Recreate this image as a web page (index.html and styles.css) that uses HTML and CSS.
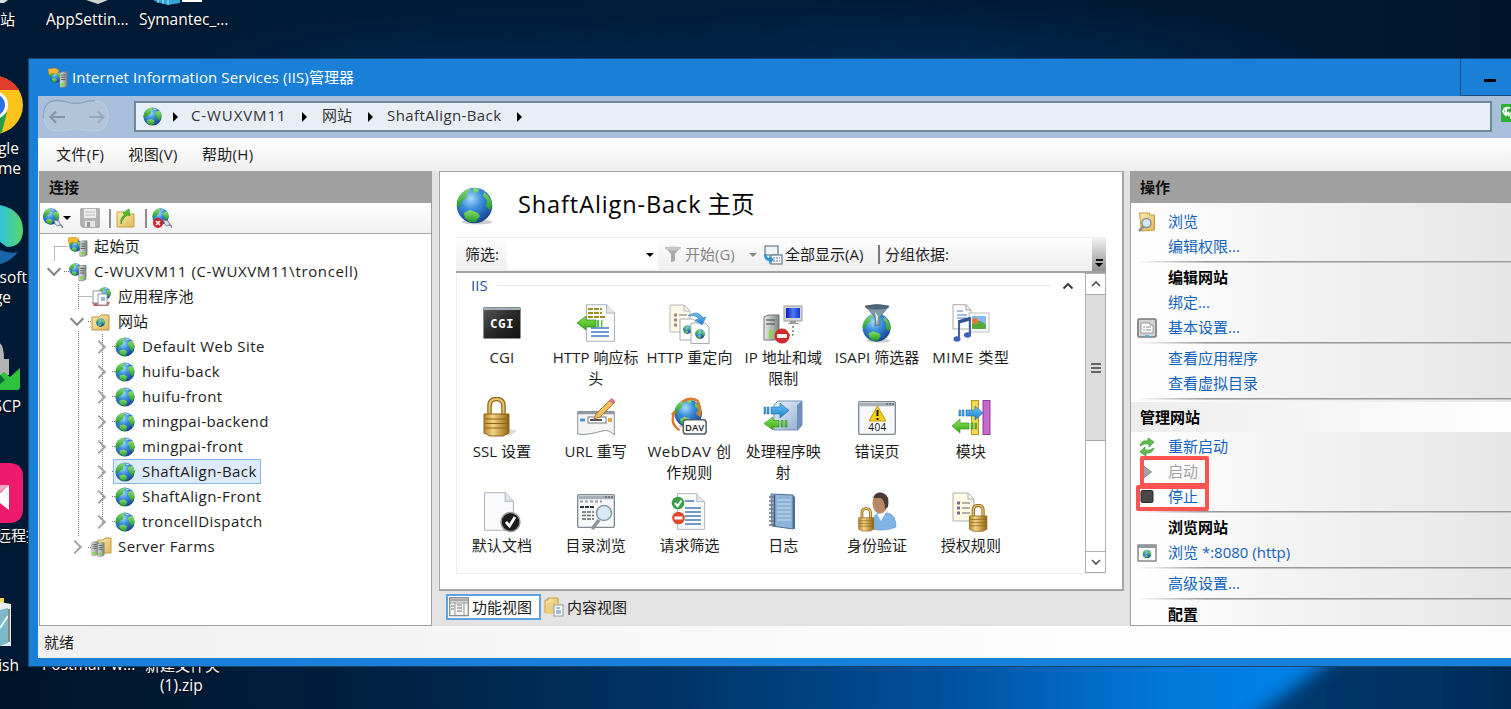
FILE: index.html
```html
<!DOCTYPE html>
<html lang="zh-CN">
<head>
<meta charset="utf-8">
<title>Internet Information Services (IIS)管理器</title>
<link rel="stylesheet" href="styles.css">
</head>
<body>
<svg class="defs" aria-hidden="true">
  <defs>
    <radialGradient id="sea" cx=".4" cy=".3" r=".75"><stop offset="0" stop-color="#a9dcfb"/><stop offset=".4" stop-color="#3c8fdd"/><stop offset="1" stop-color="#143a8c"/></radialGradient>
    <linearGradient id="land" x1="0" y1="0" x2="0" y2="1"><stop offset="0" stop-color="#8ede6a"/><stop offset="1" stop-color="#1f9a26"/></linearGradient>
    <linearGradient id="gold" x1="0" y1="0" x2="1" y2="0"><stop offset="0" stop-color="#b8862c"/><stop offset=".35" stop-color="#f3d585"/><stop offset="1" stop-color="#94640f"/></linearGradient>
    <linearGradient id="fold" x1="0" y1="0" x2="1" y2="1"><stop offset="0" stop-color="#fbeab0"/><stop offset="1" stop-color="#dfb955"/></linearGradient>
    <linearGradient id="grn" x1="0" y1="0" x2="0" y2="1"><stop offset="0" stop-color="#8be650"/><stop offset="1" stop-color="#35a91c"/></linearGradient>
    <linearGradient id="blu" x1="0" y1="0" x2="0" y2="1"><stop offset="0" stop-color="#6cc5f5"/><stop offset="1" stop-color="#1d7fcc"/></linearGradient>
    <linearGradient id="box3" x1="0" y1="0" x2="1" y2="1"><stop offset="0" stop-color="#eef4fb"/><stop offset="1" stop-color="#8aa9cf"/></linearGradient>
    <linearGradient id="steel" x1="0" y1="0" x2="1" y2="0"><stop offset="0" stop-color="#e8eceb"/><stop offset="1" stop-color="#7d8582"/></linearGradient>
    <linearGradient id="scr" x1="0" y1="0" x2="1" y2="0"><stop offset="0" stop-color="#0b18c0"/><stop offset=".5" stop-color="#4e7cf0"/><stop offset="1" stop-color="#1a35cf"/></linearGradient>
    <linearGradient id="cgi" x1="0" y1="0" x2="1" y2="1"><stop offset="0" stop-color="#5a5a5a"/><stop offset=".5" stop-color="#2a2a2a"/><stop offset="1" stop-color="#111"/></linearGradient>
    <symbol id="globe" viewBox="0 0 20 20">
      <circle cx="10" cy="10" r="9.600" fill="url(#sea)"/>
      <path d="M2 5Q5 1 9 .7L10 3 8 4 8.300 7 5 8.500 3.500 11 .8 10.500Q.6 7.500 2 5Z" fill="url(#land)"/>
      <path d="M14 4.500L17.500 4Q19.700 7 19.500 10L17.500 14.500 15.500 12.500 14 9 12.500 7Z" fill="url(#land)"/>
      <path d="M4.500 13.500L9 12.500 12 14.500 11 18.500 8 19.200Q5.500 18 4.500 16Z" fill="url(#land)"/>
      <path d="M10 1.500L15 2.300 12 3.300Z" fill="#c9edff"/>
    </symbol>
    <symbol id="bigglobe" viewBox="0 0 38 38">
      <ellipse cx="21" cy="35" rx="15" ry="2.500" fill="#aaa" opacity=".6"/>
      <circle cx="18.500" cy="18.500" r="17.800" fill="url(#sea)"/>
      <path d="M2 12Q7 3 15 1.500L13 5 10 7 11 10 6 14 4 20 1 19Q1 15 2 12Z" fill="url(#land)"/>
      <path d="M17 1L23 1.500 22 5 18 6ZM28 5Q36 11 36 18L34 24 30 19 31 13 27 9Z" fill="url(#land)"/>
      <path d="M8 26L14 23 22 26 24 29 20 35 14 35 9 31Z" fill="url(#land)"/>
    </symbol>
    <symbol id="server" viewBox="0 0 10 18"><path d="M1 2L4 .5H9V16L6 17.500H1Z" fill="url(#steel)" stroke="#777" stroke-width=".7"/><path d="M2 4h5M2 6.500h5M2 9h5" stroke="#555"/><rect x="2" y="13" width="4" height="3" fill="#7ddc3a"/></symbol>
    <symbol id="start" viewBox="0 0 20 20"><svg x="1" y="2" width="13" height="13"><use href="#globe"/></svg><path d="M0 1L7 0 11 2 9 6 4 5 1 7Z" fill="#f5b934" stroke="#bb7b10" stroke-width=".5"/><svg x="11" y="3" width="9" height="17"><use href="#server"/></svg></symbol>
    <symbol id="host" viewBox="0 0 20 20"><svg x="1" y="1" width="13" height="13"><use href="#globe"/></svg><svg x="10" y="2" width="9" height="18"><use href="#server"/></svg></symbol>
    <symbol id="doc" viewBox="0 0 30 38"><path d="M1 .7H21L29 9V37.300H1Z" fill="#fbfbfd" stroke="#aab4bf"/><path d="M21 .7V9H29" fill="#e3e7ec" stroke="#aab4bf"/></symbol>
    <symbol id="lock" viewBox="0 0 28 40"><path d="M6.500 19V9Q6.500 2 13.500 2T20.500 9V19" fill="none" stroke="#8e6215" stroke-width="4.500"/><path d="M6.500 19V9Q6.500 2 13.500 2T20.500 9V19" fill="none" stroke="#e8c76c" stroke-width="2"/><path d="M1 17H26V36L20 39H7L1 36Z" fill="url(#gold)" stroke="#8d6217"/><path d="M2 22H25M2 26.500H25M2 31H25" stroke="#8d6217" stroke-width="1"/></symbol>
    <symbol id="win" viewBox="0 0 38 34"><rect x=".7" y=".7" width="36.600" height="32.600" rx="1" fill="#f7f8f9" stroke="#7d8791" stroke-width="1.300"/><path d="M1.500 3.500H36.500" stroke="#a6afb9" stroke-width="3.500"/><path d="M28 3h2M31 3h2M34 3h2" stroke="#444"/></symbol>
    <symbol id="plug" viewBox="0 0 20 20"><svg width="17" height="17"><use href="#globe"/></svg><path d="M11.500 12L16 13 18 16.500 15 18 12.500 16Z" fill="#dfe4e8" stroke="#79848d"/><path d="M17 17Q20 17 20 20" fill="none" stroke="#79848d" stroke-width="1.500"/></symbol>
  </defs>
</svg>

<div class="desktop">
  <svg class="beam" viewBox="0 0 1511 43" preserveAspectRatio="none">
    <defs>
      <linearGradient id="bm"><stop offset="0" stop-color="#00142a"/><stop offset=".22" stop-color="#001e3c"/><stop offset=".45" stop-color="#003467"/><stop offset=".62" stop-color="#004f9b"/><stop offset=".7" stop-color="#0064be"/><stop offset=".77" stop-color="#0078da"/><stop offset=".87" stop-color="#0084ea"/><stop offset=".9" stop-color="#005cae"/></linearGradient>
      <linearGradient id="dk"><stop offset="0" stop-color="#003c74"/><stop offset="1" stop-color="#00264d"/></linearGradient>
      <filter id="soft"><feGaussianBlur stdDeviation="14 3"/></filter>
    </defs>
    <rect width="1511" height="43" fill="url(#bm)"/>
    <path d="M1350 -20L1235 65H1600V-20Z" fill="url(#dk)" filter="url(#soft)"/>
  </svg>

  <svg class="d-top" width="240" height="10"><path d="M0 0H8L4 3H0Z" fill="#d9d9d9"/><path d="M86 0H108L98 4Z" fill="#cfd6d2"/><path d="M153 0H180V3L168 5 157 2Z" fill="#35a5d8"/><path d="M158 0v3M163 0v4M168 0v5" stroke="#bde8fa"/><rect x="182" y="0" width="20" height="2" fill="#fff"/></svg>
  <span class="d-text t-zhan">站</span>
  <span class="d-text t-app">AppSettin...</span>
  <span class="d-text t-sym">Symantec_...</span>
  <svg class="d-ico chrome" width="23" height="60" viewBox="0 0 23 60"><circle cx="-6" cy="30" r="29" fill="#fbc31c"/><path d="M-6 1A29 29 0 0 1 19 15H-6Z" fill="#e23c2e"/><path d="M-6 59A29 29 0 0 0 2 57L7 37-6 44Z" fill="#24a148"/><circle cx="-6" cy="30" r="14" fill="#fff"/><circle cx="-6" cy="30" r="11" fill="#2f6fe4"/></svg>
  <span class="d-text t-gle">gle</span>
  <span class="d-text t-me">me</span>
  <svg class="d-ico edge" width="23" height="62" viewBox="0 0 23 62"><defs><linearGradient id="eg"><stop offset="0" stop-color="#2fc2d8"/><stop offset="1" stop-color="#5ad765"/></linearGradient></defs><path d="M0 1Q23 6 23 27Q22 43 7 43L0 38Z" fill="url(#eg)"/><path d="M0 46Q10 50 18 48Q10 58 0 60Z" fill="#1b63a8"/></svg>
  <span class="d-text t-soft">soft</span>
  <span class="d-text t-ge">ge</span>
  <svg class="d-ico scp" width="23" height="54" viewBox="0 0 23 54"><path d="M0 2Q4 6 4 18H9V34H0Z" fill="#b3b3b3"/><path d="M0 34L4 31 10 36 20 27V46Q20 49 17 49H0V42L4 39Z" fill="#2fc23c"/><path d="M0 34L5 39 0 43Z" fill="#063"/></svg>
  <span class="d-text t-scp">SCP</span>
  <svg class="d-ico pink" width="23" height="60" viewBox="0 0 23 60"><path d="M0 0H10Q23 1 23 13V46Q23 59 10 60H0Z" fill="#ee1b6c"/><path d="M0 30L9 22V47L0 40Z" fill="#fff"/><path d="M0 22H9L0 29Z" fill="#f9a9c6"/></svg>
  <span class="d-text t-yuan">远程控</span>
  <svg class="d-ico pub" width="14" height="54" viewBox="0 0 14 54"><path d="M0 0H4V8H0Z" fill="#f1d458"/><path d="M0 4L11 6V48H0Z" fill="#e9edf0"/><path d="M0 12L8 10V45L0 48Z" fill="#7cb8c9"/><path d="M0 30L8 18" stroke="#e5f6fa" stroke-width="2"/><path d="M9 11V44" stroke="#8c8877" stroke-width="2"/></svg>
  <span class="d-text t-ish">ish</span>
  <span class="d-text t-post">Postman-w...</span>
  <span class="d-text t-new">新建文件夹</span>
  <span class="d-text t-zip">(1).zip</span>

  <main class="window">
    <header class="title">
      <svg width="20" height="20"><use href="#start"/></svg>
      <h1>Internet Information Services (IIS)管理器</h1>
      <div class="min"><i></i></div>
    </header>

    <div class="inner">
      <nav class="address">
        <svg class="nav" width="70" height="36" viewBox="0 0 70 36"><path d="M3 18Q3 3 16 3C25 3 27 6 35 6S45 3 54 3Q67 3 67 18T54 33C45 33 43 31 35 31S25 33 16 33Q3 33 3 18Z" fill="#b2c4da" stroke="#c0cfe1"/><path d="M2.500 20Q2 2.500 16 2.500C25 2.500 27 5.500 35 5.500S45 2.500 54 2.500" fill="none" stroke="#8fa1b8" stroke-width="1.300"/><path d="M24 19H10M15 13.500L9.500 19 15 24.500" fill="none" stroke="#8494a6" stroke-width="2.200"/><path d="M48 19H62M57 13.500L62.500 19 57 24.500" fill="none" stroke="#98a8bb" stroke-width="2"/></svg>
        <div class="crumbs">
          <svg class="cg" width="19" height="19"><use href="#globe"/></svg>
          <i class="tri"></i><span class="c1">C-WUXVM11</span><i class="tri"></i><span class="c2">网站</span><i class="tri"></i><span class="c3">ShaftAlign-Back</span><i class="tri"></i>
        </div>
        <svg class="refresh" width="20" height="18" viewBox="0 0 20 18"><rect width="20" height="18" rx="1" fill="#2fae35"/><path d="M2 8Q3 3 9 4M5 4V11M2 8L5 11 8 8" stroke="#fff" stroke-width="2" fill="none"/><path d="M10 15V9M7 12L10 9" stroke="#dfffd9" stroke-width="2"/></svg>
      </nav>
      <div class="menu"><span>文件(F)</span><span>视图(V)</span><span>帮助(H)</span></div>

      <div class="body">
        <section class="left">
          <h2>连接</h2>
          <div class="tools">
            <svg width="21" height="20"><use href="#plug"/></svg>
            <i class="down"></i>
            <svg class="save" width="20" height="20" viewBox="0 0 20 20"><path d="M.8.8H19.200V19.200H2.500L.8 17.500Z" fill="#b4b4b4" stroke="#999"/><rect x="4" y="1" width="12" height="9" fill="#ececec"/><path d="M5 4h10M5 7h10" stroke="#bbb"/><rect x="5" y="13" width="10" height="6" fill="#e4e4e4"/><rect x="7" y="14" width="3" height="5" fill="#999"/></svg>
            <i class="bar"></i>
            <svg class="up" width="19" height="20" viewBox="0 0 19 20"><path d="M1 4H8L10 6H18V19H1Z" fill="url(#fold)" stroke="#c9a13c"/><path d="M5 16Q4 9 9 7L7 5 13 1 14 8 12 7Q7 9 5 16Z" fill="#4fc02c" stroke="#2d8a18" stroke-width=".6"/></svg>
            <i class="bar"></i>
            <svg class="del" width="21" height="21" viewBox="0 0 21 21"><use href="#plug" width="20" height="20"/><circle cx="6" cy="15" r="5" fill="#d3202b"/><path d="M4 13l4 4M8 13l-4 4" stroke="#fff" stroke-width="1.500"/></svg>
          </div>
          <div class="tree">
            <svg class="lines" width="120" height="340" viewBox="0 0 120 340"><path d="M14.500 12.500H28M14.500 12.500V27M24 37.500H31M38.500 50V75M38.500 62.500H52M48 87.500H52M38.500 97V302M48 313.500H54M62.500 100V292M72 112.500H78M72 137.500H78M72 162.500H78M72 187.500H78M72 212.500H78M72 237.500H78M72 262.500H78M72 287.500H78" fill="none" stroke="#777" stroke-dasharray="1 1"/></svg>
            <div class="row l0"><i class="tw"></i><svg width="20" height="20"><use href="#start"/></svg><span>起始页</span></div>
            <div class="row l0"><i class="tw open"></i><svg width="20" height="20"><use href="#host"/></svg><span class="host">C-WUXVM11 (C-WUXVM11\troncell)</span></div>
            <div class="row l1"><i class="tw"></i><svg width="20" height="20" viewBox="0 0 20 20"><svg x="7" y="0" width="13" height="13"><use href="#globe"/></svg><path d="M1 15H19L17 19H3Z" fill="#c95858"/><rect x="2" y="4" width="9" height="12" fill="#fff" stroke="#8e9aa6"/><rect x="7" y="7" width="9" height="11" fill="#fff" stroke="#8e9aa6"/><rect x="10" y="10" width="4" height="4" fill="#9bb6dc"/></svg><span class="cjk">应用程序池</span></div>
            <div class="row l1"><i class="tw open"></i><svg width="20" height="20" viewBox="0 0 20 20"><path d="M1 5H8L10 3H18V18H1Z" fill="url(#fold)" stroke="#b9913f"/><svg x="5" y="6" width="9" height="9"><use href="#globe"/></svg></svg><span class="cjk">网站</span></div>
            <div class="row l2"><i class="tw shut"></i><svg width="20" height="20"><use href="#globe"/></svg><span>Default Web Site</span></div>
            <div class="row l2"><i class="tw shut"></i><svg width="20" height="20"><use href="#globe"/></svg><span>huifu-back</span></div>
            <div class="row l2"><i class="tw shut"></i><svg width="20" height="20"><use href="#globe"/></svg><span>huifu-front</span></div>
            <div class="row l2"><i class="tw shut"></i><svg width="20" height="20"><use href="#globe"/></svg><span>mingpai-backend</span></div>
            <div class="row l2"><i class="tw shut"></i><svg width="20" height="20"><use href="#globe"/></svg><span>mingpai-front</span></div>
            <div class="row l2 sel"><i class="tw shut"></i><div class="hl"><svg width="20" height="20"><use href="#globe"/></svg><span>ShaftAlign-Back</span></div></div>
            <div class="row l2"><i class="tw shut"></i><svg width="20" height="20"><use href="#globe"/></svg><span>ShaftAlign-Front</span></div>
            <div class="row l2"><i class="tw shut"></i><svg width="20" height="20"><use href="#globe"/></svg><span>troncellDispatch</span></div>
            <div class="row l1"><i class="tw shut"></i><svg width="20" height="20" viewBox="0 0 20 20"><path d="M7 3H12L14 1H20V16H7Z" fill="url(#fold)" stroke="#c49c42"/><svg x="0" y="4" width="8" height="15"><use href="#server"/></svg><svg x="6" y="5" width="8" height="15"><use href="#server"/></svg></svg><span>Server Farms</span></div>
          </div>
        </section>

        <section class="centre">
          <div class="home">
            <div class="head"><svg width="38" height="38"><use href="#bigglobe"/></svg><h3><span>ShaftAlign-Back</span> 主页</h3></div>
            <div class="filter">
              <span class="fl">筛选:</span>
              <div class="combo"><i class="down"></i></div>
              <svg class="funnel" width="18" height="17" viewBox="0 0 18 17"><path d="M1 1H17L11 8V15L7 16V8Z" fill="#a9a9a9"/><ellipse cx="9" cy="2.500" rx="8" ry="2" fill="#c6c6c6"/></svg>
              <span class="go">开始(G)</span><i class="down grey"></i>
              <svg class="all" width="20" height="20" viewBox="0 0 20 20"><rect x="2" y="1" width="13" height="9" fill="#eef3f8" stroke="#76838f" stroke-width="1.300"/><rect x="8" y="10" width="11" height="9" fill="#f3f5f8" stroke="#76838f" stroke-width="1.300"/><path d="M10 13h7M10 16h7" stroke="#6d7fa0" stroke-dasharray="2 1"/><path d="M1 9Q1 16 6 16V19L11 14.500 6 11V13Q4 13 3 9Z" fill="#2e93d8"/></svg>
              <span class="sa">全部显示(A)</span><i class="bar"></i><span class="gb">分组依据:</span>
              <div class="more"><i></i><i class="down"></i></div>
            </div>
            <div class="list">
              <div class="items">
                <div class="group"><span>IIS</span><i></i><svg width="12" height="8" viewBox="0 0 12 8"><path d="M1.500 6.500L6 2 10.500 6.500" fill="none" stroke="#333" stroke-width="1.800"/></svg></div>
                <div class="grid">
                  <div class="item"><svg viewBox="0 0 38 38"><rect x=".5" y="3.500" width="37" height="31" rx="1" fill="url(#cgi)" stroke="#8c8c8c"/><path d="M1 5H37" stroke="#9fb0b8" stroke-width="2"/><text x="19" y="23.500" text-anchor="middle" class="cgi">CGI</text></svg><p>CGI</p></div>
                  <div class="item"><svg viewBox="0 0 38 38"><svg x="8" y="0" width="31" height="38"><use href="#doc"/></svg><path d="M11 5h14M11 9h14M11 13h18" stroke="#9c9022" stroke-width="2.200" stroke-dasharray="5 1"/><path d="M14 24h18M14 28h18M14 32h18" stroke="#3b7ac4" stroke-width="1.600"/><path d="M0 19L9 12V16H19V23H9V26Z" fill="url(#grn)" stroke="#2d8a18" stroke-width=".7"/><path d="M20 16h2v7h-2zM24 16h1.500v7H24z" fill="#5cc43c"/></svg><p>HTTP 响应标头</p></div>
                  <div class="item"><svg viewBox="0 0 40 40" class="i40"><path d="M1 1H15L21 7V28H1Z" fill="#fdf9e9" stroke="#b6b6b6"/><path d="M15 1V7H21" fill="none" stroke="#b6b6b6"/><path d="M5 11h3M5 16h3M5 21h3" stroke="#a88a72" stroke-width="3"/><path d="M10 11h8" stroke="#777"/><path d="M11 15H24L28 19V36H11Z" fill="#fff" stroke="#aaa"/><svg x="14" y="21" width="9" height="9"><use href="#globe"/></svg><path d="M22 19H36L40 23V39.500H22Z" fill="#fff" stroke="#aaa"/><svg x="26" y="25" width="10" height="10"><use href="#globe"/></svg><path d="M19 12Q29 5 34 14L37 13 33 21 26 16 30 15Q26 10 19 12Z" fill="url(#blu)" stroke="#1f6cab" stroke-width=".5"/></svg><p>HTTP 重定向</p></div>
                  <div class="item"><svg viewBox="0 0 40 40" class="i40"><path d="M1 13L5 11H16V34L12 36H1Z" fill="url(#steel)" stroke="#6d7371"/><path d="M3 16h9M3 20h9" stroke="#444"/><rect x="6" y="26" width="4" height="8" fill="#8ad54a"/><rect x="21" y="2" width="18" height="15" fill="#d7d7d7" stroke="#9b9b9b"/><rect x="23" y="4" width="14" height="10" fill="url(#scr)"/><path d="M27 17h6v2h3v1H25v-1h2z" fill="#999"/><path d="M30 22V31H25" fill="none" stroke="#333" stroke-dasharray="2 2"/><circle cx="19" cy="32" r="7.500" fill="#cf2a28"/><rect x="14" y="30" width="10" height="4" rx="1" fill="#fff"/></svg><p>IP 地址和域限制</p></div>
                  <div class="item"><svg viewBox="0 0 38 38"><svg x="4" y="9" width="30" height="30"><use href="#bigglobe"/></svg><path d="M7 2Q19-1 31 2L22 13V21L17 22V13Z" fill="#7d98a8" stroke="#53687a" stroke-width=".7"/><ellipse cx="19" cy="3" rx="12" ry="2.500" fill="#4e6678"/><path d="M17 8L19 21 20 12Z" fill="#e8f2f6"/></svg><p>ISAPI 筛选器</p></div>
                  <div class="item"><svg viewBox="0 0 38 38"><path d="M1 .7H14L19 6V25H1Z" fill="#fff" stroke="#aaa"/><path d="M14 .7V6H19" fill="none" stroke="#999"/><path d="M5 7h6M5 11h10M5 14h10" stroke="#4c7ab4"/><rect x="17" y="9" width="20" height="19" fill="#fff" stroke="#bbb"/><rect x="20" y="12" width="14" height="13" fill="#86b7ef"/><path d="M20 20Q26 13 34 21V25H20Z" fill="#58a838"/><circle cx="23" cy="17" r="3" fill="#ea7a2a"/><path d="M7 34V17L18 14V30" fill="none" stroke="#34518f" stroke-width="1.800"/><path d="M7 18L18 15" stroke="#34518f" stroke-width="3"/><ellipse cx="5" cy="35" rx="3.500" ry="2.700" fill="#3d62b4"/><ellipse cx="15.500" cy="31" rx="3.500" ry="2.700" fill="#3d62b4"/></svg><p class="wide">MIME 类型</p></div>

                  <div class="item"><svg viewBox="0 0 38 38"><path d="M24 30L34 33 28 37H10Z" fill="#ccc" opacity=".7"/><svg x="0" y="-1" width="28" height="40"><use href="#lock"/></svg></svg><p>SSL 设置</p></div>
                  <div class="item"><svg viewBox="0 0 38 38"><path d="M.7 13.500H37.300V37Q32 31 25 33T12 36 .7 36Z" fill="#f4f4f4" stroke="#8b949c"/><path d="M1 15H37" stroke="#8e99a4" stroke-width="2.500"/><path d="M3 22h5" stroke="#4f94d0" stroke-width="3"/><rect x="11" y="19" width="18" height="6" fill="#fff" stroke="#777"/><path d="M13 22h12" stroke="#555" stroke-width="2"/><rect x="31" y="20" width="4" height="4" fill="#e0a848"/><path d="M17 21L19 16 34 1 38 4 23 19Z" fill="#f0c064" stroke="#a8702a"/><path d="M32 3L35 0 38 3 36 6Z" fill="#d4788a"/></svg><p>URL 重写</p></div>
                  <div class="item"><svg viewBox="0 0 38 40"><svg x="3" y="1" width="31" height="31"><use href="#bigglobe"/></svg><path d="M9 34Q-2 27 4 14M12 4Q20-2 28 3Q32 9 30 18L27 15M4 14L1 18" fill="none" stroke="#e0762c" stroke-width="2.500"/><rect x="13" y="23" width="24" height="15" rx="3" fill="#fff" stroke="#4d5f6b" stroke-width="1.600"/><text x="25" y="34.500" text-anchor="middle" class="dav">DAV</text></svg><p class="wide">WebDAV 创作规则</p></div>
                  <div class="item"><svg viewBox="0 0 38 38"><path d="M10 7L14 3H38V27L34 32H10Z" fill="url(#box3)" stroke="#7893b5"/><path d="M33 7L38 3V27L33 32Z" fill="#6f8fb8"/><path d="M0 9h1.500v7H0zM3 9h2v7H3zM7 9H16V5L25 12.500 16 20V16H7Z" fill="url(#blu)" stroke="#1b6fad" stroke-width=".6"/><path d="M0 25.500L9 19V22.500H15V29H9V32ZM17 22.500h2V29h-2zM21 22.500h2V29h-2z" fill="url(#grn)" stroke="#2d8a18" stroke-width=".6"/></svg><p>处理程序映射</p></div>
                  <div class="item"><svg viewBox="0 0 38 38"><svg y="3" width="38" height="32"><use href="#win" width="38" height="34"/></svg><path d="M19.500 8L28 23H11Z" fill="#f6cf1d" stroke="#c69a08" stroke-linejoin="round"/><path d="M19.500 12v6M19.500 20v2" stroke="#111" stroke-width="2"/><text x="19.500" y="32.500" text-anchor="middle" class="e404">404</text></svg><p>错误页</p></div>
                  <div class="item"><svg viewBox="0 0 38 38"><rect x="19.500" y="2.500" width="7" height="34" fill="#f2d84d" stroke="#b79a1d"/><rect x="31" y="2.500" width="7" height="34" fill="#c768cf" stroke="#8e3d98"/><path d="M7 12h1.500v6H7zM10 12h2v6h-2zM14 12H23V8L31 15 23 22V18H14Z" fill="url(#blu)" stroke="#1b6fad" stroke-width=".6"/><path d="M0 28L8 21V25H17V31H8V35ZM19 25h2v6h-2zM23 25h1.500v6H23z" fill="url(#grn)" stroke="#2d8a18" stroke-width=".6"/></svg><p>模块</p></div>

                  <div class="item"><svg viewBox="0 0 38 40" class="i40"><svg x="0" y="0" width="32" height="39"><use href="#doc"/></svg><circle cx="27.500" cy="30" r="9.500" fill="#1d1d1d" stroke="#999" stroke-width="1.500"/><path d="M23 30L26.500 34 32 25" fill="none" stroke="#fff" stroke-width="2.800"/></svg><p>默认文档</p></div>
                  <div class="item"><svg viewBox="0 0 38 38"><svg y="2" width="38" height="34"><use href="#win"/></svg><path d="M3 9.500h22" stroke="#999" stroke-width="2" stroke-dasharray="3 2"/><path d="M3 15h15" stroke="#333" stroke-width="2" stroke-dasharray="4 1"/><path d="M5 20h12M5 23.500h12M5 27h12" stroke="#666" stroke-width="1.500" stroke-dasharray="4 1"/><path d="M22 28L15 37" stroke="#909090" stroke-width="3.500"/><circle cx="27" cy="21" r="7.500" fill="#d6eafa" stroke="#8d9aa5" stroke-width="1.600"/></svg><p>目录浏览</p></div>
                  <div class="item"><svg viewBox="0 0 38 38"><svg x="6" y="1" width="30" height="37"><use href="#doc"/></svg><path d="M15 9h9M15 16h16M15 20h16M15 24h16M15 28h16M15 32h16" stroke="#477bb9" stroke-width="1.300"/><circle cx="8" cy="11" r="6.300" fill="#3c9d4b"/><path d="M5 11L7.500 14 11.500 8.500" fill="none" stroke="#fff" stroke-width="2"/><circle cx="8.500" cy="26" r="6.300" fill="#de4a2c"/><rect x="4.500" y="24.500" width="8" height="3" fill="#fff"/></svg><p>请求筛选</p></div>
                  <div class="item"><svg viewBox="0 0 38 38"><path d="M7 2L29 3V37L8 34Z" fill="#8eb3d8" stroke="#4d6f95"/><path d="M29 3L31 5V37L29 37Z" fill="#4d6f95"/><path d="M13 8H27M13 12H27M13 16H27M13 20H27M13 24H27M13 28H27" stroke="#c3dbee"/><path d="M10.500 3V34" stroke="#395a80" stroke-width="1.400"/><path d="M5 5h5M5 9h5M5 13h5M5 17h5M5 21h5M5 25h5M5 29h5M5 33h5" stroke="#777" stroke-width="1.500"/></svg><p>日志</p></div>
                  <div class="item"><svg viewBox="0 0 38 40" class="i40"><path d="M14 37Q14 22 21 21H30Q38 23 38 35Q27 40 14 37Z" fill="#80b4e4" stroke="#4c7fb3" stroke-width=".5"/><path d="M19 22L23 29 28 20Z" fill="#fff"/><ellipse cx="22" cy="11" rx="7.500" ry="10.500" fill="#b98863"/><path d="M15 6Q18-1 25 1Q32 3 30 15L27 17Q27 9 23 6Z" fill="#4a3d37"/><svg x="0" y="15" width="17" height="25"><use href="#lock"/></svg></svg><p>身份验证</p></div>
                  <div class="item"><svg viewBox="0 0 38 40" class="i40"><path d="M1 1H16L22 7V29H1Z" fill="#fdfbe6" stroke="#b0b0b0"/><path d="M16 1V7H22" fill="none" stroke="#aaa"/><path d="M5 11h3M5 16h3M5 21h3" stroke="#7d6a8e" stroke-width="3"/><path d="M10 11h8M10 16h8M10 21h8" stroke="#666"/><svg x="16" y="12" width="21" height="28"><use href="#lock"/></svg></svg><p>授权规则</p></div>
                </div>
              </div>
              <div class="scroll">
                <div class="sb"><svg width="12" height="8" viewBox="0 0 12 8"><path d="M2 6L6 2 10 6" fill="none" stroke="#555" stroke-width="1.700"/></svg></div>
                <div class="thumb"><i></i><i></i><i></i></div>
                <div class="track"></div>
                <div class="sb"><svg width="12" height="8" viewBox="0 0 12 8"><path d="M2 2L6 6 10 2" fill="none" stroke="#555" stroke-width="1.700"/></svg></div>
              </div>
            </div>
          </div>
          <div class="tabs">
            <div class="tab on"><svg width="20" height="20" viewBox="0 0 20 20"><rect x=".7" y=".7" width="18.600" height="18" fill="#f4f4f4" stroke="#838383" stroke-width="1.200"/><path d="M1 3H19" stroke="#aaa" stroke-width="3"/><path d="M6 5V18M15 5V18M1 6H19" stroke="#999"/><path d="M2 9h3M2 12h3M8 8h5M8 11h5M8 14h5" stroke="#777"/></svg><span>功能视图</span></div>
            <div class="tab"><svg width="20" height="20" viewBox="0 0 20 20"><path d="M1 3H4V1H14V16H1Z" fill="url(#fold)" stroke="#c09a45"/><path d="M3 6H17L14 17H1Z" fill="#eccf80"/><rect x="10" y="8" width="9" height="11" fill="#fff" stroke="#8b97a8"/><path d="M12 11h4M12 14h5M12 16h5" stroke="#3f72c0"/></svg><span>内容视图</span></div>
          </div>
        </section>

        <aside class="right">
          <h2>操作</h2>
          <div class="acts">
            <div class="act"><svg width="19" height="20" viewBox="0 0 19 20"><path d="M2 1H12V3H17V18L4 19Z" fill="url(#fold)" stroke="#c49b34"/><circle cx="9" cy="11" r="4.500" fill="#d4e9f6" stroke="#8a8f95" stroke-width="1.400"/><path d="M6 14.500L1.500 19" stroke="#8a8f95" stroke-width="2.500"/></svg><a>浏览</a></div>
            <div class="act"><a>编辑权限...</a></div>
            <hr>
            <div class="act"><b>编辑网站</b></div>
            <div class="act"><a>绑定...</a></div>
            <div class="act"><svg width="20" height="20" viewBox="0 0 20 20"><rect x="1" y="1" width="18" height="18" rx="1" fill="#d4d4d4" stroke="#777" stroke-width="1.600"/><path d="M4 5H13V7H16V15H4Z" fill="#fff" stroke="#999"/><path d="M6 9h2M9 9h5M6 12h2M9 12h5" stroke="#888"/><rect x="8" y="17" width="4" height="2" fill="#3cbbe0"/></svg><a>基本设置...</a></div>
            <hr>
            <div class="act"><a>查看应用程序</a></div>
            <div class="act"><a>查看虚拟目录</a></div>
            <hr>
            <h4>管理网站</h4>
            <div class="act"><svg width="20" height="20" viewBox="0 0 20 20"><path d="M3 9Q4 3 11 4V1L17 5 12 10V7Q7 6 3 9Z" fill="#62bd50" stroke="#3f8e35" stroke-width=".7"/><path d="M17 11Q15 17 9 16V19L3 15 8 10V13Q13 14 17 11Z" fill="#62bd50" stroke="#3f8e35" stroke-width=".7"/></svg><a>重新启动</a></div>
            <div class="act"><svg width="20" height="20" viewBox="0 0 20 20"><path d="M6 3.500L14.500 10 6 16.500Z" fill="#a3a3a3" stroke="#888"/></svg><a class="off">启动</a></div>
            <div class="act"><svg width="20" height="20" viewBox="0 0 20 20"><rect x="4" y="3.500" width="12" height="12" rx="1.500" fill="#484848" stroke="#262626"/></svg><a>停止</a></div>
            <hr>
            <div class="act"><b>浏览网站</b></div>
            <div class="act"><svg width="20" height="20" viewBox="0 0 20 20"><rect x="1" y="2" width="18" height="16" fill="#fafafa" stroke="#7a7a7a" stroke-width="1.300"/><path d="M1 3.500H19" stroke="#8f989f" stroke-width="3"/><svg x="5.500" y="6.500" width="9" height="9"><use href="#globe"/></svg></svg><a class="port">浏览 *:8080 (http)</a></div>
            <hr>
            <div class="act"><a>高级设置...</a></div>
            <hr>
            <div class="act"><b>配置</b></div>
            <div class="mark m1"></div>
            <div class="mark m2"></div>
          </div>
        </aside>
      </div>
      <footer>就绪</footer>
    </div>
  </main>
</div>
</body>
</html>
```
FILE: styles.css
```css
* { box-sizing: border-box; }
html, body { margin: 0; width: 1511px; height: 709px; overflow: hidden; }
body { font: 15px/21px "Open Sans", "Noto Sans CJK SC", sans-serif; color: #1c1c1c; white-space: nowrap; }
svg { display: block; flex: none; overflow: visible; }
h1, h2, h3, h4, p { margin: 0; font-weight: 400; }
i { flex: none; }
.defs { position: absolute; width: 0; height: 0; }

.desktop { position: relative; width: 1511px; height: 709px; overflow: hidden;
  background: radial-gradient(ellipse 420px 60px at 930px 60px, #00284e, transparent), radial-gradient(ellipse 300px 60px at 480px 70px, #00264b, transparent), linear-gradient(90deg, #001a35, #001c39 50%, #00152c); }
.beam { position: absolute; left: 0; top: 666px; width: 1511px; height: 43px; overflow: hidden; }
.d-top { position: absolute; left: 0; top: 0; }
.d-ico { position: absolute; left: 0; }
.chrome { top: 75px; } .edge { top: 204px; } .scp { top: 341px; } .pink { top: 463px; } .pub { top: 598px; }
.d-text { position: absolute; color: #fff; font-size: 15.500px; text-shadow: 0 1px 2px #000; }
.t-zhan { left: 0; top: 9px; font-size: 15px; }
.t-app { left: 46px; top: 9px; }
.t-sym { left: 139px; top: 9px; }
.t-gle { right: 1492px; top: 138px; }
.t-me { right: 1490px; top: 158px; }
.t-soft { right: 1484px; top: 267px; }
.t-ge { right: 1500px; top: 287px; }
.t-scp { right: 1490px; top: 396px; }
.t-yuan { left: -4px; top: 525px; font-size: 15px; }
.t-ish { right: 1492px; top: 655px; }
.t-post { left: 42px; top: 654px; }
.t-new { left: 145px; top: 655px; font-size: 15px; }
.t-zip { left: 160px; top: 675px; }

.window { position: absolute; left: 28px; top: 58px; width: 1501px; height: 609px; padding: 0 0 9px 10px; border: 1px solid #14456f; border-right: 0; background: #1a80d7; display: flex; flex-direction: column; }
.title { height: 37px; display: flex; align-items: center; color: #fff; padding-left: 9px; flex: none; }
.title h1 { font-size: 15px; margin-left: 4px; letter-spacing: .1px; }
.min { width: 69px; height: 37px; margin-left: auto; border-left: 1px solid #1c4f80; border-bottom: 1px solid #1c4f80; padding: 20px 0 0 23px; }
.min i { display: block; width: 12px; height: 3px; background: #000; }
.inner { margin-left: -1px; flex: 1; background: #fff; display: flex; flex-direction: column; min-height: 0; }
.address { height: 42px; background: #a8bfdb; display: flex; align-items: flex-start; padding: 5px 0 0 3px; flex: none; }
.nav { margin-top: -3px; }
.crumbs { width: 1358px; height: 31px; margin-left: 23px; border: 2px solid #74869a; background: #e8eef6; display: flex; align-items: center; padding-left: 7px; color: #333; }
.cg { margin-right: 11px; }
.tri { border-left: 5px solid #000; border-top: 5px solid transparent; border-bottom: 5px solid transparent; width: 5px; }
.crumbs .c1, .crumbs .c2, .crumbs .c3 { margin-top: -2px; }
.c1 { width: 96px; margin: 0 15px 0 13px; letter-spacing: .9px; } .c2 { width: 31px; margin: 0 15px; } .c3 { width: 116px; margin: 0 14px; letter-spacing: .4px; }
.refresh { margin: 3px 0 0 9px; }
.menu { height: 33px; background: linear-gradient(#fff, #eee); display: flex; align-items: center; padding: 0 0 1px 18px; gap: 24px; letter-spacing: .35px; flex: none; }
.body { height: 455px; background: #e3e3e3; display: flex; flex: none; }
.left { width: 393px; border: 1px solid #a0a0a0; background: #fff; margin-left: 1px; display: flex; flex-direction: column; }
h2 { height: 31px; font-size: 15px; line-height: 31px; font-weight: 700; color: #111; background: #a0a0a0; padding-left: 9px; flex: none; }
.tools { height: 31px; border-bottom: 1px solid #a8a8a8; background: linear-gradient(#fff, #f0f0f0); display: flex; align-items: center; padding-left: 2px; flex: none; }
.down { border-top: 4px solid #000; border-left: 4px solid transparent; border-right: 4px solid transparent; width: 8px; height: 4px; }
.down.grey { border-top-color: #888; }
.bar { width: 2px; height: 19px; background: #8f8f8f; }
.save { margin: 0 9px 0 9px; } .up { margin: 0 10px 0 5px; } .del { margin-left: 5px; }
.tree { position: relative; flex: 1; }
.lines { position: absolute; left: 0; top: 0; }
.row { position: relative; height: 25px; display: flex; align-items: center; }
.row.l0 { padding-left: 7px; } .row.l1 { padding-left: 30px; } .row.l2 { padding-left: 54px; }
.row svg { margin-right: 6px; }
.row.l1 svg, .row.l2 svg { margin-right: 7px; }
.tw { width: 13px; height: 13px; margin-right: 8px; display: flex; align-items: center; justify-content: center; }
.tw::before { content: ""; width: 0; height: 0; }
.open::before, .shut::before { width: 8px; height: 8px; border: solid #7c8288; border-width: 0 2px 2px 0; transform: translateY(-3px) rotate(45deg); }
.shut::before { border-color: #a3a3a3; transform: translateX(-2px) rotate(-45deg); }
.row span { letter-spacing: .42px; margin-top: -1px; }
.row .host { letter-spacing: .62px; } .row .cjk { letter-spacing: .1px; }
.hl { display: flex; align-items: center; height: 25px; width: 148px; margin-left: -2px; padding-left: 1px; background: #dcebfb; border: 1px solid #8bb8e8; }
.centre { width: 685px; margin-left: 7px; display: flex; flex-direction: column; }
.home { height: 420px; border: 2px solid #a5a5a5; border-width: 1px 2px 2px 1px; background: #fff; padding: 15px 15px 0 16px; }
.head { display: flex; align-items: center; height: 38px; }
.home h3 { font-size: 23.500px; line-height: 32px; margin-left: 24px; margin-top: -5px; color: #000; }
.home h3 span { letter-spacing: .9px; }
.filter { height: 36px; width: 650px; margin-top: 12px; border-bottom: 2px solid #a2a2a2; border-top: 1px solid #eee; background: linear-gradient(#fdfdfd, #eee); display: flex; align-items: center; padding-left: 9px; }
.fl { width: 42px; }
.combo { width: 151px; height: 31px; background: #fff; display: flex; align-items: center; justify-content: flex-end; padding-right: 4px; }
.funnel { margin: 0 3px 0 6px; }
.go { color: #858585; width: 52px; } .grey { margin: 0 6px 0 12px; }
.sa { margin-left: 2px; width: 81px; } .filter .bar { margin: 0 6px 0 12px; background: #777; }
.gb { margin-left: -1px; }
.more { margin-left: auto; width: 14px; height: 33px; background: linear-gradient(#f2f2f2, #909090); display: flex; flex-direction: column; align-items: center; justify-content: flex-end; padding-bottom: 4px; gap: 2px; }
.more i:first-child { width: 7px; height: 2px; background: #111; }
.list { height: 301px; width: 650px; display: flex; border-bottom: 1px solid #eee; border-left: 1px solid #eee; }
.items { width: 628px; }
.group { height: 25px; display: flex; align-items: center; color: #2a50a0; padding-left: 14px; }
.group i { width: 553px; height: 1px; background: #e3e5ea; margin: 0 12px 0 6px; }
.group span { width: 20px; }
.grid { display: grid; grid-template-columns: repeat(6, 93.800px); grid-auto-rows: 94px; margin: 6px 0 0 -2px; }
.item { display: flex; flex-direction: column; align-items: center; }
.item > svg { width: 38px; height: 38px; }
.item > svg.i40 { width: 40px; height: 40px; margin-bottom: -2px; }
.item p { width: 90px; white-space: normal; text-align: center; margin-top: 5px; word-break: break-all; letter-spacing: .05px; }
.item .wide { letter-spacing: .55px; }
.cgi { font: 700 12.500px "DejaVu Sans Mono", monospace; fill: #fff; letter-spacing: .5px; }
.dav { font: 600 10px "Open Sans", sans-serif; fill: #222; }
.e404 { font: 10px "Open Sans", sans-serif; fill: #111; letter-spacing: .4px; }
.scroll { width: 21px; margin-left: auto; border: 1px solid #b0b0b0; display: flex; flex-direction: column; background: #fff; }
.sb { height: 20px; display: flex; align-items: center; justify-content: center; flex: none; }
.thumb { height: 147px; background: #dcdcdc; border: solid #a8a8a8; border-width: 1px 0; display: flex; flex-direction: column; align-items: center; justify-content: center; gap: 2px; }
.thumb i { width: 10px; height: 2px; background: #666; }
.track { flex: 1; border-bottom: 1px solid #b0b0b0; }
.tabs { display: flex; gap: 3px; padding: 3px 0 0 7px; }
.tab { height: 26px; display: flex; align-items: center; gap: 3px; }
.tab.on { width: 95px; border: 2px solid #5ca3e2; background: #fff; padding-left: 1px; }
.right { flex: 1; margin-left: 6px; border: 1px solid #a0a0a0; border-right: 0; background: #fff; display: flex; flex-direction: column; width: 0; }
.acts { position: relative; height: 422px; padding-top: 6px; overflow: hidden; background: linear-gradient(90deg, #fff, #f3f3f3 40%, #e6e6e6 380px); }
.act { height: 25px; display: flex; align-items: center; justify-content: flex-start; padding-left: 37px; }
.act > svg { margin: 0 11px 0 -31px; width: 20px; height: 20px; }
.act a { color: #1263bd; } .act a.off { color: #a0a0a0; }
.act b, h4 { color: #000; font-weight: 700; }
hr { margin: 2px 0 0 6px; height: 4px; border: 0; background: linear-gradient(90deg, transparent, #999 70px) 0 0 / 100% 1px no-repeat, linear-gradient(90deg, transparent, #c4c4c4 70px) 0 1px / 100% 1px no-repeat; }
h4 { height: 32px; line-height: 31px; padding-left: 9px; font-size: 15px; background: linear-gradient(90deg, #ededed, #fff) 0 0 / 100% 30px no-repeat; }
.mark { position: absolute; border: 4px solid #fe5353; border-radius: 2px; }
.m1 { left: 9px; top: 253px; width: 69px; height: 31px; }
.m2 { left: 5px; top: 282px; width: 73px; height: 26px; }
footer { flex: 1; padding-left: 6px; line-height: 32px; background: linear-gradient(90deg, #f0f0f0, #fdfdfd 70%); }
```
